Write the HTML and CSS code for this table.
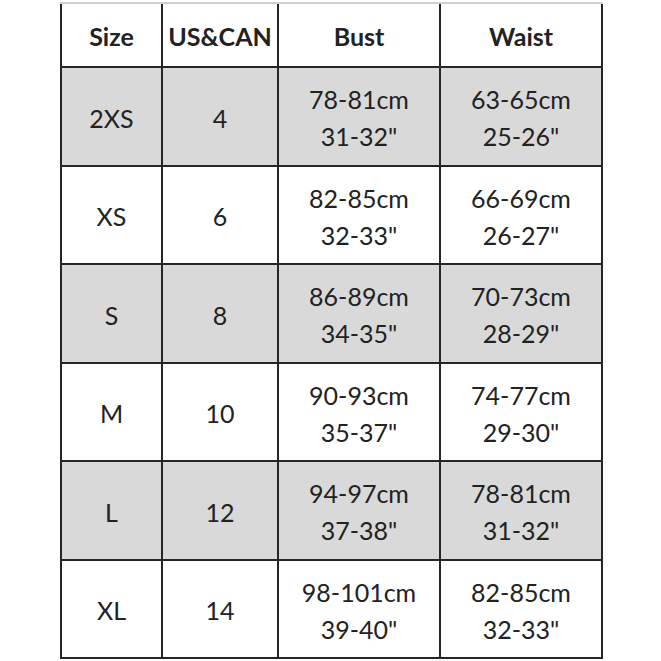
FILE: index.html
```html
<!DOCTYPE html>
<html lang="en">
<head>
<meta charset="utf-8">
<title>Size Chart</title>
<link rel="stylesheet" href="styles.css">
</head>
<body>
<div class="chart" role="table" aria-label="Size chart">
  <div class="cell head" role="columnheader">Size</div>
  <div class="cell head" role="columnheader">US&amp;CAN</div>
  <div class="cell head" role="columnheader">Bust</div>
  <div class="cell head" role="columnheader">Waist</div>

  <div class="cell shade">2XS</div>
  <div class="cell shade">4</div>
  <div class="cell shade">78-81cm<br>31-32"</div>
  <div class="cell shade">63-65cm<br>25-26"</div>

  <div class="cell">XS</div>
  <div class="cell">6</div>
  <div class="cell">82-85cm<br>32-33"</div>
  <div class="cell">66-69cm<br>26-27"</div>

  <div class="cell shade">S</div>
  <div class="cell shade">8</div>
  <div class="cell shade">86-89cm<br>34-35"</div>
  <div class="cell shade">70-73cm<br>28-29"</div>

  <div class="cell">M</div>
  <div class="cell">10</div>
  <div class="cell">90-93cm<br>35-37"</div>
  <div class="cell">74-77cm<br>29-30"</div>

  <div class="cell shade">L</div>
  <div class="cell shade">12</div>
  <div class="cell shade">94-97cm<br>37-38"</div>
  <div class="cell shade">78-81cm<br>31-32"</div>

  <div class="cell">XL</div>
  <div class="cell">14</div>
  <div class="cell">98-101cm<br>39-40"</div>
  <div class="cell">82-85cm<br>32-33"</div>
</div>
</body>
</html>
```

FILE: styles.css
```css
html, body {
  margin: 0;
  padding: 0;
  background: #ffffff;
}

body {
  font-family: Lato, "Liberation Sans", sans-serif;
  color: #222222;
}

.chart {
  display: grid;
  grid-template-columns: 99px 114px 160px 160px;
  grid-template-rows: 62px repeat(6, 96.5px);
  gap: 2px;
  width: max-content;
  margin: 2px 0 0 60px;
  padding: 0 2px 2px 2px;
  background: #262626;
  border-top: 2px solid #cfcfcf;
}

.cell {
  display: flex;
  align-items: center;
  justify-content: center;
  text-align: center;
  background: #ffffff;
  font-size: 25px;
  line-height: 37px;
  padding-top: 4px;
  box-sizing: border-box;
}

.cell.shade {
  background: #d9d9d9;
}

.cell.head {
  font-weight: 700;
  padding-top: 3px;
}
```
